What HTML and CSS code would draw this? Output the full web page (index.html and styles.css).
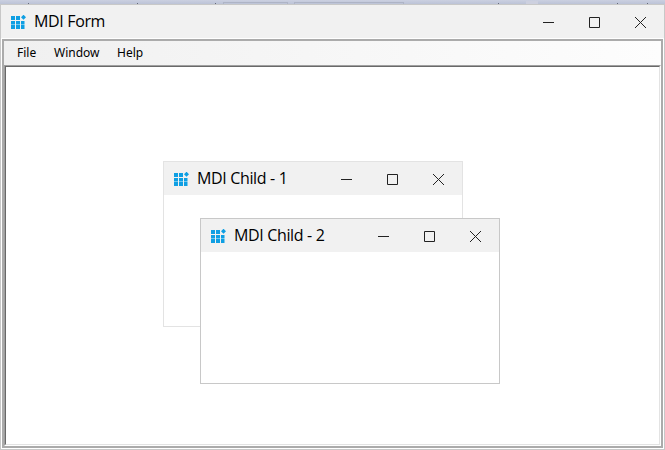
FILE: index.html
```html
<!DOCTYPE html>
<html lang="en">
<head>
<meta charset="utf-8">
<title>MDI Form</title>
<link rel="stylesheet" href="styles.css">
</head>
<body>
<svg class="defs" aria-hidden="true">
  <symbol id="logo" viewBox="0 0 15 14">
    <path fill="#0f9fe3" d="M0 1h4v4H0zM5 1h4v4H5zM0 6h4v3H0zM5 6h4v3H5zM10 6h3.500v3H10zM0 10h4v4H0zM5 10h4v4H5zM10 10h3.500v4H10zM12.500 -.3L15 2.300l-2.500 2.500L10 2.300z"/>
    <path fill="#6fc7f0" d="M0 9h4v1H0zM5 9h4v1H5zM10 9h3.500v1H10z"/>
  </symbol>
  <symbol id="min" viewBox="0 0 11 11"><path fill="#222" d="M0 5h11v1H0z"/></symbol>
  <symbol id="max" viewBox="0 0 11 11"><path fill="none" stroke="#222" d="M.5 .5h10v10H.5z"/></symbol>
  <symbol id="close" viewBox="0 0 11 11"><path fill="none" stroke="#222" d="M0 0l11 11M11 0L0 11"/></symbol>
</svg>
<div class="backdrop"><i class="tick t1"></i><i class="tick t2"></i><i class="tick t3"></i><i class="slot s1"></i><i class="slot s2"></i><i class="tick t4"></i><i class="patch"></i><i class="tick t5"></i><i class="tick t6"></i></div>
<main class="window">
  <header class="titlebar">
    <svg class="logo"><use href="#logo"/></svg>
    <h1 class="title">MDI Form</h1>
    <div class="controls">
      <button aria-label="Minimize"><svg><use href="#min"/></svg></button>
      <button aria-label="Maximize"><svg><use href="#max"/></svg></button>
      <button aria-label="Close"><svg><use href="#close"/></svg></button>
    </div>
  </header>
  <div class="frame">
    <nav class="menu"><span class="file">File</span><span class="win">Window</span><span class="help">Help</span></nav>
    <section class="client">
      <article class="child first">
        <header class="titlebar">
          <svg class="logo"><use href="#logo"/></svg>
          <h2 class="title">MDI Child - 1</h2>
          <div class="controls">
            <button aria-label="Minimize"><svg><use href="#min"/></svg></button>
            <button aria-label="Maximize"><svg><use href="#max"/></svg></button>
            <button aria-label="Close"><svg><use href="#close"/></svg></button>
          </div>
        </header>
      </article>
      <article class="child second">
        <header class="titlebar">
          <svg class="logo"><use href="#logo"/></svg>
          <h2 class="title">MDI Child - 2</h2>
          <div class="controls">
            <button aria-label="Minimize"><svg><use href="#min"/></svg></button>
            <button aria-label="Maximize"><svg><use href="#max"/></svg></button>
            <button aria-label="Close"><svg><use href="#close"/></svg></button>
          </div>
        </header>
      </article>
    </section>
  </div>
</main>
</body>
</html>
```
FILE: styles.css
```css
* { box-sizing: border-box; }
body {
  margin: 0;
  width: 665px;
  height: 450px;
  overflow: hidden;
  display: flex;
  flex-direction: column;
  font-family: "Open Sans", "Noto Sans", sans-serif;
  color: #000;
}
.defs { position: absolute; width: 0; height: 0; }
.backdrop {
  position: relative;
  flex: none;
  height: 4px;
  background: linear-gradient(#cbd0e1, #bcc3d7);
}
.tick { position: absolute; top: 3px; width: 1px; height: 1px; background: #666b7b; }
.t1 { left: 28px; }
.t2 { left: 137px; }
.t3 { left: 215px; }
.t4 { left: 498px; }
.t5 { left: 617px; }
.t6 { left: 647px; }
.slot { position: absolute; top: 2px; height: 2px; border: 1px solid #aeb4c6; border-bottom: 0; }
.s1 { left: 223px; width: 65px; }
.s2 { left: 294px; width: 110px; }
.patch { position: absolute; top: 1px; left: 526px; width: 12px; height: 3px; background: #cdd0df; }
.window {
  flex: 1;
  display: flex;
  flex-direction: column;
  border: 1px solid #c8c8c8;
  background: #fff;
}
.titlebar {
  display: flex;
  align-items: center;
  height: 33px;
  padding-left: 10px;
  background: #f1f1f1;
}
.logo { flex: none; width: 15px; height: 14px; margin-top: 1px; overflow: visible; }
.logo use { overflow: visible; }
.title {
  margin: -2px 0 0 8px;
  flex: 1;
  font-size: 16px;
  line-height: 20px;
  font-weight: 400;
  letter-spacing: -0.35px;
  white-space: nowrap;
}
.controls { display: flex; margin-right: 1px; }
.controls button {
  display: flex;
  justify-content: center;
  align-items: center;
  width: 46px;
  height: 33px;
  padding: 2px 0 0;
  border: 0;
  background: none;
}
.controls svg { width: 11px; height: 11px; }
.frame {
  flex: 1;
  display: flex;
  flex-direction: column;
  margin: 1px;
  border: 2px solid #ababab;
}
.menu {
  display: flex;
  align-items: center;
  height: 24px;
  padding-left: 13px;
  background: linear-gradient(90deg, #f0f0f0, #fdfdfd);
  font-family: "Noto Sans", "Open Sans", sans-serif;
  font-size: 12px;
  line-height: 16px;
}
.file { width: 37px; }
.win { width: 63px; }
.client {
  flex: 1;
  position: relative;
  border: 1px solid;
  border-color: #a0a0a0 #fff #fff #a0a0a0;
}
.client::before {
  content: "";
  position: absolute;
  inset: 0;
  border: 1px solid;
  border-color: #696969 #e3e3e3 #e3e3e3 #696969;
}
.child {
  position: absolute;
  width: 300px;
  height: 166px;
  border: 1px solid #e3e3e3;
  background: #fff;
}
.first { left: 158px; top: 95px; }
.second { left: 195px; top: 152px; border-color: #c8c8c8; }
```
